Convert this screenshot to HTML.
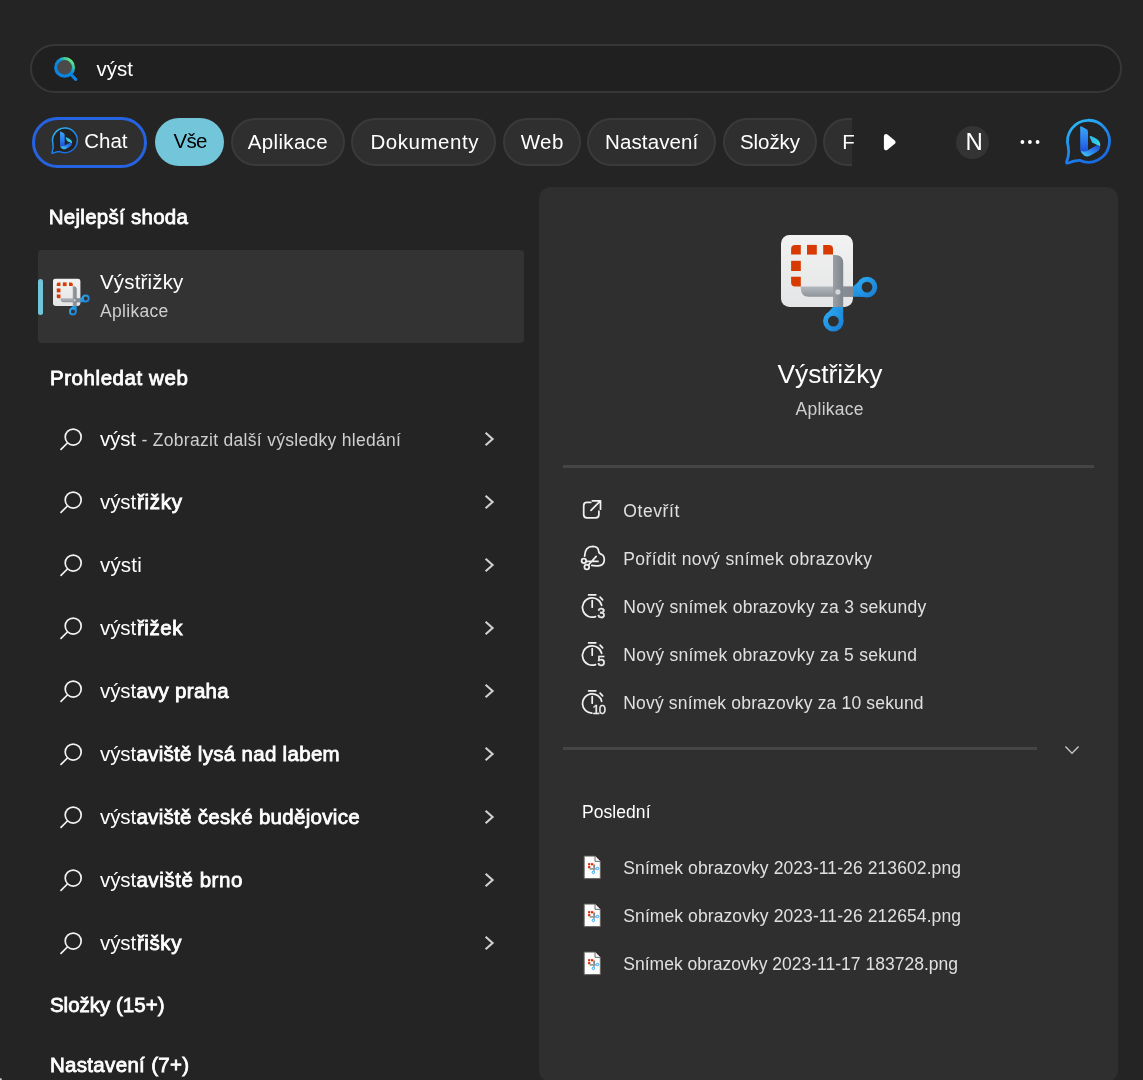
<!DOCTYPE html>
<html lang="cs">
<head>
<meta charset="utf-8">
<title>Hledat</title>
<style>
html,body{margin:0;padding:0;}
body{width:1143px;height:1080px;overflow:hidden;background:#242424;position:relative;
  font-family:"Liberation Sans",sans-serif;color:#fff;}
.abs{position:absolute;}
.t{position:absolute;white-space:nowrap;line-height:1em;}
.sb{-webkit-text-stroke:0.8px currentColor;}
svg{position:absolute;overflow:visible;}
/* search box */
#sbox{left:30px;top:44px;width:1092px;height:49px;box-sizing:border-box;border:2px solid #373737;border-radius:25px;background:#202020;}
/* chips */
.chip{position:absolute;top:118px;height:48px;box-sizing:border-box;border:2px solid #3a3a3a;border-radius:24px;background:#2f2f2f;}
#chat{box-sizing:border-box;left:32px;top:117px;width:115px;height:51px;border:3px solid #2563e0;border-radius:26px;background:#2f2f2f;}
#vse{left:155px;width:69px;border:none;background:#73c6d9;}
#clip{left:0;top:0;width:852px;height:180px;overflow:hidden;}
/* right panel */
#panel{left:539px;top:187px;width:579px;height:895px;border-radius:12px;background:#2f2f2f;}
/* selected result */
#sel{left:38px;top:250px;width:486px;height:93px;border-radius:4px;background:#333333;}
#bar{left:38px;top:279px;width:4.5px;height:36px;border-radius:2.5px;background:#70c5d9;}
.div{position:absolute;height:3px;background:#454545;}
#ncirc{left:956px;top:125.5px;width:33px;height:33px;border-radius:50%;background:#343434;}
</style>
</head>
<body>
<!-- search field -->
<div id="sbox" class="abs"></div>

<!-- filter chips (clipped at x=852 like the scrolling strip) -->
<div id="clip" class="abs">
  <div id="chat" class="abs"></div>
  <div id="vse" class="chip"></div>
  <div class="chip" style="left:231px;width:114px"></div>
  <div class="chip" style="left:351px;width:145px"></div>
  <div class="chip" style="left:503px;width:78px"></div>
  <div class="chip" style="left:587px;width:129px"></div>
  <div class="chip" style="left:723px;width:94px"></div>
  <div class="chip" style="left:823px;width:90px"></div>
</div>
<div id="ncirc" class="abs"></div>
<div class="abs" style="left:0;top:1078px;width:2px;height:2px;background:#c8c8c8;border-top-right-radius:2px"></div>

<!-- left column -->
<div id="sel" class="abs"></div>
<div id="bar" class="abs"></div>

<!-- right preview panel -->
<div id="panel" class="abs"></div>
<div class="div" style="left:563px;top:465px;width:531px"></div>
<div class="div" style="left:563px;top:747px;width:474px"></div>

<div id="fg" class="abs" style="left:0;top:0;width:1143px;height:1080px;will-change:transform">
<svg width="1143" height="1080" viewBox="0 0 1143 1080" style="left:0;top:0">
<defs>
<linearGradient id="gs" x1="0.15" y1="0.85" x2="0.85" y2="0.1"><stop offset="0" stop-color="#0a84e4"/><stop offset="0.55" stop-color="#0a8ae0"/><stop offset="0.8" stop-color="#35c2a8"/><stop offset="1" stop-color="#62e886"/></linearGradient>
<linearGradient id="gbub" x1="0.2" y1="0.05" x2="0.75" y2="1"><stop offset="0" stop-color="#2bb6f6"/><stop offset="0.5" stop-color="#1f86ee"/><stop offset="1" stop-color="#1767e0"/></linearGradient>
<linearGradient id="gbar" x1="0" y1="0" x2="0" y2="1"><stop offset="0" stop-color="#3aa6f4"/><stop offset="0.55" stop-color="#2a7bf0"/><stop offset="1" stop-color="#1c4fd8"/></linearGradient>
<linearGradient id="gleaf" x1="0" y1="0" x2="1" y2="1"><stop offset="0" stop-color="#2fb4ee"/><stop offset="0.6" stop-color="#2cd0e6"/><stop offset="1" stop-color="#5fe8c8"/></linearGradient>
<linearGradient id="gsw" x1="0" y1="1" x2="1" y2="0"><stop offset="0" stop-color="#46d8f2"/><stop offset="0.45" stop-color="#2f8cf0"/><stop offset="1" stop-color="#1c46d4"/></linearGradient>
<symbol id="bing" viewBox="0 0 60 60">
  <path d="M10.2 36.7 A21 21 0 1 1 21.6 50.3 Q15.5 50.6 10.3 53 Q7.9 53.8 8.7 51.4 Q11.6 44.5 10.2 36.7 Z" fill="var(--bf,none)" stroke="url(#gbub)" stroke-width="var(--bw,2.8)" stroke-linejoin="round"/>
  <path d="M22.2 17.2 Q22.2 15.6 23.6 16.4 L28.6 19.3 Q30 20.2 30 22 L30 40.2 L26.5 42.2 Q22.2 43 22.2 39 Z" fill="url(#gbar)"/>
  <path d="M31.8 27.2 Q31.2 25.6 32.9 26.1 Q39 28.3 41.2 31.2 Q43 34 42 37.6 Q41.2 35.8 39.3 34.9 L35.6 33.3 Q34.2 32.7 33.6 31.4 Z" fill="url(#gleaf)"/>
  <path d="M22.6 40.5 Q23 43.5 26 45.6 Q29 47.4 32 45.8 L39 41.8 Q42.6 39.6 42 36.6 Q41.4 34.9 39.2 34.9 L30 40.2 Q26 42.6 22.6 40.5 Z" fill="url(#gsw)"/>
</symbol>
</defs>
<g><circle cx="64.6" cy="67.4" r="8.9" fill="#4a4a4a" stroke="url(#gs)" stroke-width="3.1"/><path d="M71.6 75.1 L75.7 79.3" stroke="#0a84e4" stroke-width="3.1" stroke-linecap="round" fill="none"/></g>
<use href="#bing" x="46.95" y="121.9" width="35.4" height="35.4" style="--bf:#222222;--bw:2.6"/>
<use href="#bing" x="1058" y="110" width="60" height="60" style="--bw:2.8"/>
<path d="M886.1 136.3 L893.4 142.1 L886.1 148 Z" fill="#ffffff" stroke="#ffffff" stroke-width="4.4" stroke-linejoin="round"/>
<circle cx="1022.4" cy="142" r="1.9" fill="#ffffff"/>
<circle cx="1029.9" cy="142" r="1.9" fill="#ffffff"/>
<circle cx="1037.6" cy="142" r="1.9" fill="#ffffff"/>
<g fill="none" stroke="#f2f2f2" stroke-width="1.7" stroke-linecap="round"><circle cx="73.2" cy="437.1" r="8"/><path d="M67.4 443.0 L61 449.4"/></g>
<path d="M485.6 432.7 L492.6 439.0 L485.6 445.3" fill="none" stroke="#d0d0d0" stroke-width="2.1" stroke-linejoin="miter"/>
<g fill="none" stroke="#f2f2f2" stroke-width="1.7" stroke-linecap="round"><circle cx="73.2" cy="500.1" r="8"/><path d="M67.4 506.0 L61 512.4"/></g>
<path d="M485.6 495.7 L492.6 502.0 L485.6 508.3" fill="none" stroke="#d0d0d0" stroke-width="2.1" stroke-linejoin="miter"/>
<g fill="none" stroke="#f2f2f2" stroke-width="1.7" stroke-linecap="round"><circle cx="73.2" cy="563.1" r="8"/><path d="M67.4 569.0 L61 575.4"/></g>
<path d="M485.6 558.7 L492.6 565.0 L485.6 571.3" fill="none" stroke="#d0d0d0" stroke-width="2.1" stroke-linejoin="miter"/>
<g fill="none" stroke="#f2f2f2" stroke-width="1.7" stroke-linecap="round"><circle cx="73.2" cy="626.1" r="8"/><path d="M67.4 632.0 L61 638.4"/></g>
<path d="M485.6 621.7 L492.6 628.0 L485.6 634.3" fill="none" stroke="#d0d0d0" stroke-width="2.1" stroke-linejoin="miter"/>
<g fill="none" stroke="#f2f2f2" stroke-width="1.7" stroke-linecap="round"><circle cx="73.2" cy="689.1" r="8"/><path d="M67.4 695.0 L61 701.4"/></g>
<path d="M485.6 684.7 L492.6 691.0 L485.6 697.3" fill="none" stroke="#d0d0d0" stroke-width="2.1" stroke-linejoin="miter"/>
<g fill="none" stroke="#f2f2f2" stroke-width="1.7" stroke-linecap="round"><circle cx="73.2" cy="752.1" r="8"/><path d="M67.4 758.0 L61 764.4"/></g>
<path d="M485.6 747.7 L492.6 754.0 L485.6 760.3" fill="none" stroke="#d0d0d0" stroke-width="2.1" stroke-linejoin="miter"/>
<g fill="none" stroke="#f2f2f2" stroke-width="1.7" stroke-linecap="round"><circle cx="73.2" cy="815.1" r="8"/><path d="M67.4 821.0 L61 827.4"/></g>
<path d="M485.6 810.7 L492.6 817.0 L485.6 823.3" fill="none" stroke="#d0d0d0" stroke-width="2.1" stroke-linejoin="miter"/>
<g fill="none" stroke="#f2f2f2" stroke-width="1.7" stroke-linecap="round"><circle cx="73.2" cy="878.1" r="8"/><path d="M67.4 884.0 L61 890.4"/></g>
<path d="M485.6 873.7 L492.6 880.0 L485.6 886.3" fill="none" stroke="#d0d0d0" stroke-width="2.1" stroke-linejoin="miter"/>
<g fill="none" stroke="#f2f2f2" stroke-width="1.7" stroke-linecap="round"><circle cx="73.2" cy="941.1" r="8"/><path d="M67.4 947.0 L61 953.4"/></g>
<path d="M485.6 936.7 L492.6 943.0 L485.6 949.3" fill="none" stroke="#d0d0d0" stroke-width="2.1" stroke-linejoin="miter"/>
<path d="M1065.4 746.6 L1072 753.2 L1078.6 746.6" fill="none" stroke="#c4c4c4" stroke-width="1.4"/>
<defs>
<linearGradient id="gsq" x1="0" y1="0" x2="0" y2="1"><stop offset="0" stop-color="#f2f2f2"/><stop offset="1" stop-color="#e4e5e6"/></linearGradient>
<linearGradient id="gv" x1="0" y1="0" x2="1" y2="0"><stop offset="0" stop-color="#9aa0a6"/><stop offset="1" stop-color="#7e848b"/></linearGradient>
<linearGradient id="gh" x1="0" y1="0" x2="0" y2="1"><stop offset="0" stop-color="#b4b9be"/><stop offset="1" stop-color="#8d9399"/></linearGradient>
<linearGradient id="gbl" x1="0" y1="0" x2="1" y2="1"><stop offset="0" stop-color="#2aa8f0"/><stop offset="1" stop-color="#1b80d4"/></linearGradient>
<symbol id="snip" viewBox="0 0 100 100">
  <rect x="0" y="0" width="72" height="72" rx="8.5" fill="url(#gsq)"/>
  <g fill="#d83b01">
    <path d="M10.1 19.6 V14 Q10.1 9.9 14.2 9.9 H19.8 V19.6 Z"/>
    <rect x="26" y="9.9" width="9.8" height="9.7"/>
    <path d="M42.2 9.9 H48 Q52 9.9 52 14 V19.6 H42.2 Z"/>
    <rect x="10.1" y="25.8" width="9.7" height="10.2"/>
    <path d="M10.1 41.8 H19.8 V51.5 H14.2 Q10.1 51.5 10.1 47.5 Z"/>
  </g>
  <!-- horizontal blade -->
  <path d="M19.8 51.5 H72 V61.8 H28 Q19.8 61.8 19.8 53.6 Z" fill="url(#gh)"/>
  <!-- vertical blade -->
  <path d="M52 20 H54 Q62.2 20 62.2 28.2 V72 H52 Z" fill="url(#gv)"/>
  <rect x="62.2" y="51.5" width="9.8" height="10.3" fill="#858b92"/>
  <circle cx="56.9" cy="56.9" r="2.6" fill="#d2d6da"/>
  <!-- blue handles -->
  <path d="M72 51.5 L78.3 46.2 L84 61.9 L72 61.8 Z" fill="url(#gbl)"/>
  <circle cx="86" cy="52.1" r="7.85" fill="none" stroke="url(#gbl)" stroke-width="4.9"/>
  <path d="M52 72 L46.4 78.3 L62.3 84 L62.2 72 Z" fill="url(#gbl)"/>
  <circle cx="52.4" cy="86.1" r="7.85" fill="none" stroke="url(#gbl)" stroke-width="4.9"/>
</symbol>
<symbol id="fileico" viewBox="0 0 20 26">
  <path d="M1.5 1.5 H12.6 L18 6.9 V24.5 H1.5 Z" fill="#fdfdfd" stroke="#66625d" stroke-width="1"/>
  <path d="M12.6 1.5 V6.9 H18" fill="#ffffff" stroke="#66625d" stroke-width="1" stroke-linejoin="round"/>
  <g transform="translate(0.45 0.7)"><g fill="#e02d08"><rect x="5" y="8" width="2.3" height="2.2"/><rect x="8" y="8" width="2.3" height="2.2"/><rect x="5" y="11" width="2.3" height="2.2"/></g>
  <rect x="10.3" y="9.3" width="1.9" height="6.3" fill="#80868d"/>
  <rect x="6.6" y="13" width="6.3" height="1.7" fill="#9499a0"/>
  <circle cx="14.7" cy="13.5" r="1.25" fill="#ffffff" stroke="#22a0ea" stroke-width="1"/>
  <circle cx="10.5" cy="17.4" r="1.25" fill="#ffffff" stroke="#22a0ea" stroke-width="1"/></g>
</symbol>
</defs>
<use href="#snip" x="781" y="235" width="100" height="100"/>
<use href="#snip" x="52.9" y="278.6" width="38.2" height="38.2"/>
<use href="#fileico" x="582.7" y="854.6" width="19.6" height="25.5"/>
<use href="#fileico" x="582.7" y="902.6" width="19.6" height="25.5"/>
<use href="#fileico" x="582.7" y="950.6" width="19.6" height="25.5"/>
<g fill="none" stroke="#f0f0f0" stroke-width="1.75" stroke-linecap="round" stroke-linejoin="round"><path d="M590.7 502.4 H587 Q583.7 502.4 583.7 505.7 V514.5 Q583.7 517.8 587 517.8 H595.6 Q598.9 517.8 598.9 514.5 V511.2"/><path d="M591 510.4 L600.4 500.9 M592.3 500.8 H600.5 V509.2"/></g>
<g fill="none" stroke="#f0f0f0" stroke-width="1.75" stroke-linecap="round" stroke-linejoin="round"><path d="M584.6 556.1 Q585 546.3 592.7 546.3 Q598.4 546.6 598.6 551 Q598.8 553.6 601.4 554.3 Q604.4 555.6 604.3 560 Q604 565.6 598 565.8 Q594 566 591.8 565.4"/><circle cx="583.9" cy="560.8" r="2.3"/><circle cx="586.8" cy="566.9" r="2.4"/><path d="M586.2 561.3 L598 561.4 M588.4 565 L596.2 556.4"/></g>
<g fill="none" stroke="#f0f0f0" stroke-width="1.75" stroke-linecap="round" stroke-linejoin="round"><path d="M601.65 605.32 A9.7 9.7 0 1 0 595.52 616.62"/><path d="M588.6 594.8 H595.8 M600.1 597.2 L602.6 599.8 M592.2 600.6 V607.2"/></g>
<text x="597.2" y="617.7" font-family="Liberation Sans, sans-serif" font-size="14.4" stroke="#f0f0f0" stroke-width="0.45" fill="#f0f0f0">3</text>
<g fill="none" stroke="#f0f0f0" stroke-width="1.75" stroke-linecap="round" stroke-linejoin="round"><path d="M601.65 653.32 A9.7 9.7 0 1 0 595.52 664.62"/><path d="M588.6 642.8 H595.8 M600.1 645.2 L602.6 647.8 M592.2 648.6 V655.2"/></g>
<text x="597.2" y="665.7" font-family="Liberation Sans, sans-serif" font-size="14.4" stroke="#f0f0f0" stroke-width="0.45" fill="#f0f0f0">5</text>
<g fill="none" stroke="#f0f0f0" stroke-width="1.75" stroke-linecap="round" stroke-linejoin="round"><path d="M601.65 701.32 A9.7 9.7 0 1 0 591.86 713.19"/><path d="M588.6 690.8 H595.8 M600.1 693.2 L602.6 695.8 M592.2 696.6 V703.2"/></g>
<text x="592.6" y="713.6" font-family="Liberation Sans, sans-serif" font-size="13" letter-spacing="-1.1" stroke="#f0f0f0" stroke-width="0.35" fill="#f0f0f0">10</text>
</svg>

<span id="sq" class="t " style="left:96.4px;top:59.05px;font-size:20.5px;color:#ffffff;letter-spacing:0.049px">výst</span>
<span id="c0" class="t " style="left:84.2px;top:131.05px;font-size:20.5px;color:#ffffff;letter-spacing:-0.004px">Chat</span>
<span id="c1" class="t " style="left:173.6px;top:131.05px;font-size:20.5px;color:#000000;letter-spacing:-0.700px">Vše</span>
<span id="c2" class="t " style="left:247.8px;top:131.65px;font-size:20.5px;color:#ffffff;letter-spacing:0.329px">Aplikace</span>
<span id="c3" class="t " style="left:370.4px;top:131.65px;font-size:20.5px;color:#ffffff;letter-spacing:0.552px">Dokumenty</span>
<span id="c4" class="t " style="left:520.7px;top:131.65px;font-size:20.5px;color:#ffffff;letter-spacing:0.409px">Web</span>
<span id="c5" class="t " style="left:605.0px;top:131.65px;font-size:20.5px;color:#ffffff;letter-spacing:0.123px">Nastavení</span>
<span id="c6" class="t " style="left:740.0px;top:131.65px;font-size:20.5px;color:#ffffff;letter-spacing:-0.078px">Složky</span>
<span id="c7" class="t " style="left:842.3px;top:131.65px;font-size:20.5px;color:#ffffff;letter-spacing:0.000px">F</span>
<span id="nn" class="t " style="left:965.4px;top:129.68px;font-size:24.0px;color:#ffffff;letter-spacing:0.000px">N</span>
<span id="h1" class="t sb" style="left:48.8px;top:206.95px;font-size:20.5px;color:#ffffff;letter-spacing:0.267px">Nejlepší shoda</span>
<span id="bt" class="t " style="left:100.0px;top:271.65px;font-size:20.5px;color:#ffffff;letter-spacing:0.163px">Výstřižky</span>
<span id="bs" class="t " style="left:100.0px;top:303.39px;font-size:17.5px;color:#cfcfcf;letter-spacing:0.306px">Aplikace</span>
<span id="h2" class="t sb" style="left:49.9px;top:367.65px;font-size:20.5px;color:#ffffff;letter-spacing:0.578px">Prohledat web</span>
<span id="h3" class="t sb" style="left:49.9px;top:994.95px;font-size:20.5px;color:#ffffff;letter-spacing:0.008px">Složky (15+)</span>
<span id="h4" class="t sb" style="left:49.9px;top:1054.95px;font-size:20.5px;color:#ffffff;letter-spacing:0.328px">Nastavení (7+)</span>
<span id="rt" class="t " style="left:777.5px;top:361.44px;font-size:26.3px;color:#ffffff;letter-spacing:-0.025px">Výstřižky</span>
<span id="rs" class="t " style="left:795.6px;top:401.49px;font-size:17.5px;color:#cfcfcf;letter-spacing:0.249px">Aplikace</span>
<span id="a1" class="t " style="left:623.3px;top:502.99px;font-size:17.5px;color:#e0e0e0;letter-spacing:0.581px">Otevřít</span>
<span id="a2" class="t " style="left:623.3px;top:551.09px;font-size:17.5px;color:#e0e0e0;letter-spacing:0.372px">Pořídit nový snímek obrazovky</span>
<span id="a3" class="t " style="left:623.3px;top:599.09px;font-size:17.5px;color:#e0e0e0;letter-spacing:0.280px">Nový snímek obrazovky za 3 sekundy</span>
<span id="a4" class="t " style="left:623.3px;top:647.09px;font-size:17.5px;color:#e0e0e0;letter-spacing:0.272px">Nový snímek obrazovky za 5 sekund</span>
<span id="a5" class="t " style="left:623.3px;top:695.09px;font-size:17.5px;color:#e0e0e0;letter-spacing:0.169px">Nový snímek obrazovky za 10 sekund</span>
<span id="rh" class="t " style="left:582.1px;top:804.09px;font-size:17.5px;color:#ffffff;letter-spacing:0.042px">Poslední</span>
<span id="f1" class="t " style="left:623.3px;top:860.09px;font-size:17.5px;color:#e0e0e0;letter-spacing:0.090px">Snímek obrazovky 2023-11-26 213602.png</span>
<span id="f2" class="t " style="left:623.3px;top:908.09px;font-size:17.5px;color:#e0e0e0;letter-spacing:0.090px">Snímek obrazovky 2023-11-26 212654.png</span>
<span id="f3" class="t " style="left:623.3px;top:956.09px;font-size:17.5px;color:#e0e0e0;letter-spacing:0.009px">Snímek obrazovky 2023-11-17 183728.png</span>
<span id="w0n" class="t " style="left:100.0px;top:428.55px;font-size:20.5px;color:#ffffff;letter-spacing:-0.151px">výst</span>
<span id="w1n" class="t " style="left:100.0px;top:491.55px;font-size:20.5px;color:#ffffff;letter-spacing:-0.084px">výst</span>
<span id="w1b" class="t sb" style="left:136.9px;top:491.55px;font-size:20.5px;color:#ffffff;letter-spacing:0.715px">řižky</span>
<span id="w2n" class="t " style="left:100.0px;top:554.55px;font-size:20.5px;color:#ffffff;letter-spacing:0.175px">výsti</span>
<span id="w3n" class="t " style="left:100.0px;top:617.55px;font-size:20.5px;color:#ffffff;letter-spacing:-0.084px">výst</span>
<span id="w3b" class="t sb" style="left:136.9px;top:617.55px;font-size:20.5px;color:#ffffff;letter-spacing:0.601px">řižek</span>
<span id="w4n" class="t " style="left:100.0px;top:680.55px;font-size:20.5px;color:#ffffff;letter-spacing:-0.084px">výst</span>
<span id="w4b" class="t sb" style="left:136.4px;top:680.55px;font-size:20.5px;color:#ffffff;letter-spacing:0.284px">avy praha</span>
<span id="w5n" class="t " style="left:100.0px;top:743.55px;font-size:20.5px;color:#ffffff;letter-spacing:-0.084px">výst</span>
<span id="w5b" class="t sb" style="left:136.4px;top:743.55px;font-size:20.5px;color:#ffffff;letter-spacing:0.308px">aviště lysá nad labem</span>
<span id="w6n" class="t " style="left:100.0px;top:806.55px;font-size:20.5px;color:#ffffff;letter-spacing:-0.084px">výst</span>
<span id="w6b" class="t sb" style="left:136.4px;top:806.55px;font-size:20.5px;color:#ffffff;letter-spacing:0.308px">aviště české budějovice</span>
<span id="w7n" class="t " style="left:100.0px;top:869.55px;font-size:20.5px;color:#ffffff;letter-spacing:-0.084px">výst</span>
<span id="w7b" class="t sb" style="left:136.4px;top:869.55px;font-size:20.5px;color:#ffffff;letter-spacing:0.572px">aviště brno</span>
<span id="w8n" class="t " style="left:100.0px;top:932.55px;font-size:20.5px;color:#ffffff;letter-spacing:-0.084px">výst</span>
<span id="w8b" class="t sb" style="left:136.9px;top:932.55px;font-size:20.5px;color:#ffffff;letter-spacing:0.590px">řišky</span>
<span id="w0s" class="t " style="left:141.5px;top:432.49px;font-size:17.5px;color:#cfcfcf;letter-spacing:0.297px">- Zobrazit další výsledky hledání</span>
</div>
</body>
</html>
